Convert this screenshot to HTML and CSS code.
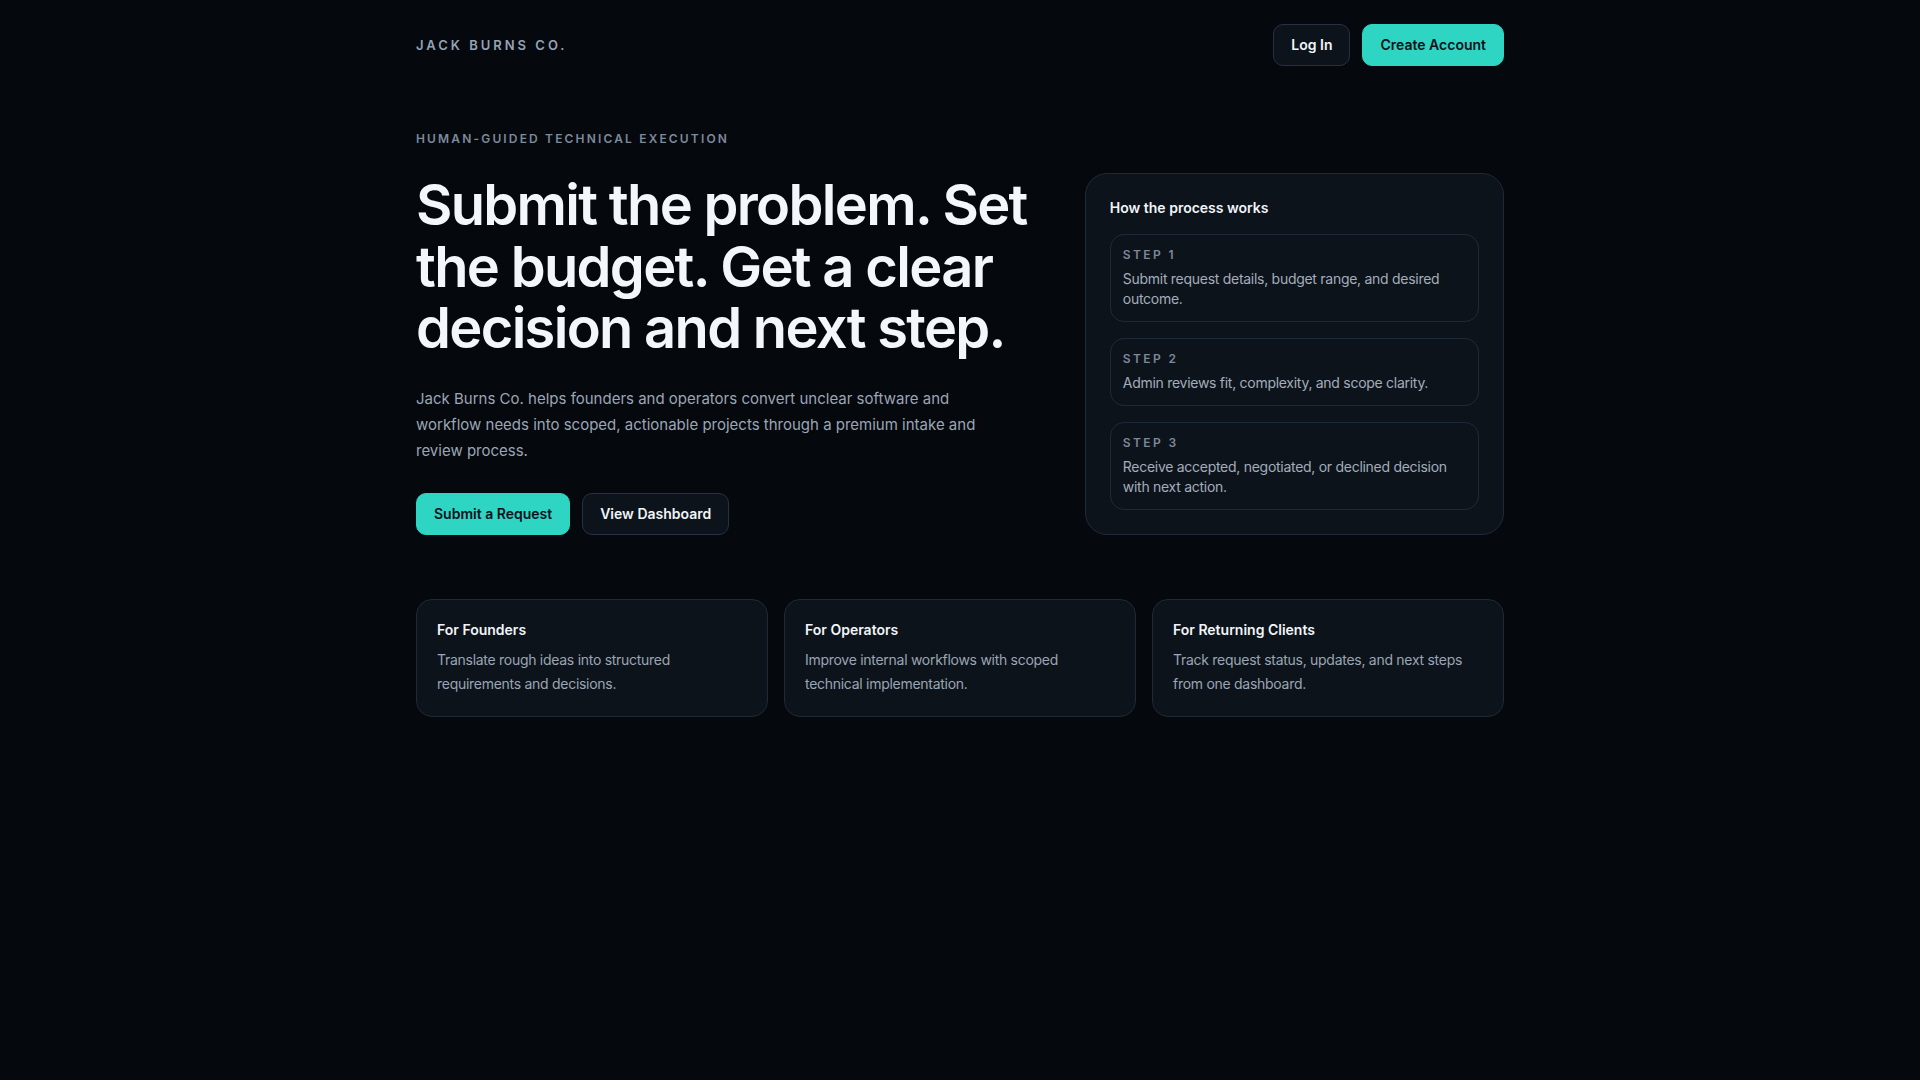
FILE: index.html
```html
<!DOCTYPE html>
<html lang="en">
<head>
  <meta charset="UTF-8">
  <meta name="viewport" content="width=device-width, initial-scale=1.0">
  <title>Jack Burns Co.</title>
  <link rel="stylesheet" href="styles.css">
</head>
<body>

  <div class="page">
    <header class="nav">
      <a href="#" class="logo">JACK BURNS CO.</a>
      <div class="nav-actions">
        <a href="#" class="btn btn-dark">Log In</a>
        <a href="#" class="btn btn-teal">Create Account</a>
      </div>
    </header>

    <section class="hero">
      <div class="hero-copy">
        <p class="eyebrow">HUMAN-GUIDED TECHNICAL EXECUTION</p>
        <h1>Submit the problem. Set the budget. Get a clear decision and next step.</h1>
        <p class="lead">Jack Burns Co. helps founders and operators convert unclear software and workflow needs into scoped, actionable projects through a premium intake and review process.</p>
        <div class="hero-actions">
          <a href="#" class="btn btn-teal">Submit a Request</a>
          <a href="#" class="btn btn-dark">View Dashboard</a>
        </div>
      </div>

      <!-- Process card -->
      <div class="process-card">
        <h3>How the process works</h3>
        <div class="step">
          <span class="step-label">STEP 1</span>
          <p>Submit request details, budget range, and desired outcome.</p>
        </div>
        <div class="step">
          <span class="step-label">STEP 2</span>
          <p>Admin reviews fit, complexity, and scope clarity.</p>
        </div>
        <div class="step">
          <span class="step-label">STEP 3</span>
          <p>Receive accepted, negotiated, or declined decision with next action.</p>
        </div>
      </div>
    </section>

    <section class="audience">
      <div class="audience-card">
        <h4>For Founders</h4>
        <p>Translate rough ideas into structured requirements and decisions.</p>
      </div>
      <div class="audience-card">
        <h4>For Operators</h4>
        <p>Improve internal workflows with scoped technical implementation.</p>
      </div>
      <div class="audience-card">
        <h4>For Returning Clients</h4>
        <p>Track request status, updates, and next steps from one dashboard.</p>
      </div>
    </section>
  </div>

</body>
</html>
```

FILE: styles.css
```css
body {
  font-family: Inter, "Noto Sans", Arial, sans-serif;
  background-color: #05080c;
  color: #f1f5f9;
  margin: 0;
  padding: 0;
  min-height: 100vh;
}

a {
  text-decoration: none;
}

.page {
  width: 1088px;
  margin: 0 auto;
}

/* Nav */
.nav {
  display: flex;
  justify-content: space-between;
  align-items: center;
  padding: 24px 0;
}

.logo {
  color: #94a3b8;
  font-size: 13px;
  font-weight: 600;
  letter-spacing: 0.23em;
}

.nav-actions {
  display: flex;
  gap: 12px;
}

.btn {
  display: inline-block;
  font-size: 14px;
  font-weight: 600;
  line-height: 20px;
  padding: 10px 17px;
  border-radius: 10px;
  border: 1px solid transparent;
}

.btn-teal {
  background-color: #2fd5c3;
  border-color: #2fd5c3;
  color: #08111a;
}

.btn-dark {
  background-color: #0d131b;
  border-color: #263244;
  color: #f1f5f9;
}

/* Hero */
.hero {
  display: grid;
  grid-template-columns: 1.5fr 1fr;
  gap: 40px;
  align-items: end;
  padding-top: 41px;
}

.eyebrow {
  margin: 0;
  color: #7d8a9c;
  font-size: 12px;
  line-height: 16px;
  font-weight: 600;
  letter-spacing: 0.18em;
}

.hero-copy h1 {
  margin: 28px 0 0;
  font-size: 56px;
  line-height: 1.1;
  font-weight: 600;
  letter-spacing: -0.03em;
  color: #f3f6fa;
}

.lead {
  margin: 26px 0 0;
  max-width: 580px;
  font-size: 15px;
  line-height: 26px;
  color: #9aa6b8;
}

.hero-actions {
  display: flex;
  gap: 12px;
  margin-top: 29px;
}

.process-card {
  background-color: #0d131a;
  border: 1px solid #1f2a38;
  border-radius: 22px;
  padding: 24px;
  display: flex;
  flex-direction: column;
  gap: 16px;
}

.process-card h3 {
  margin: 0;
  font-size: 14px;
  line-height: 20px;
  font-weight: 600;
  color: #f1f5f9;
}

.step {
  border: 1px solid #1f2a38;
  border-radius: 14px;
  padding: 12px 12px;
}

.step-label {
  display: block;
  font-size: 12px;
  line-height: 16px;
  font-weight: 600;
  letter-spacing: 0.2em;
  color: #7d8898;
}

.step p {
  margin: 6px 0 0;
  font-size: 14px;
  line-height: 20px;
  letter-spacing: -0.02em;
  color: #a3adbc;
}

/* Audience cards */
.audience {
  display: grid;
  grid-template-columns: repeat(3, 1fr);
  gap: 16px;
  margin-top: 64px;
}

.audience-card {
  background-color: #0d131a;
  border: 1px solid #1f2a38;
  border-radius: 16px;
  padding: 20px;
}

.audience-card h4 {
  margin: 0;
  font-size: 14px;
  line-height: 20px;
  font-weight: 600;
  color: #f1f5f9;
}

.audience-card p {
  margin: 8px 0 0;
  font-size: 14px;
  line-height: 24px;
  letter-spacing: -0.02em;
  color: #9aa5b5;
}
```
